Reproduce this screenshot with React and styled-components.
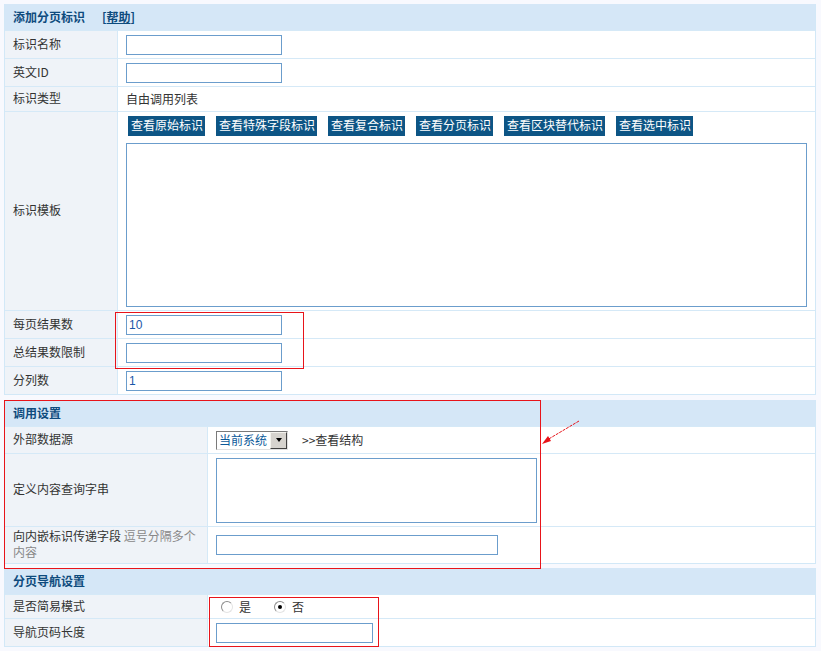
import styled, { createGlobalStyle } from "styled-components";

const GlobalStyle = createGlobalStyle`
  html, body {
    margin: 0;
    padding: 0;
    background: #f8f9fe;
  }
  body {
    font-family: "Liberation Sans", "Noto Sans CJK SC", sans-serif;
    font-size: 12px;
    color: #333;
  }
`;

const Page = styled.div`
  position: relative;
  padding: 4px;
  width: 812px;
`;

const Section = styled.div`
  border: 1px solid #d2e8f7;
  border-top-color: #d5e7f7;
  background: #fff;
  margin-bottom: ${(p) => p.$gap || 4}px;
`;

const SectionHead = styled.div`
  height: 25px;
  display: flex;
  align-items: center;
  padding: 0 0 2px 8px;
  box-sizing: border-box;
  background: #d5e7f7;
  color: #0e4b7d;
  font-weight: bold;
  font-family: "Noto Sans CJK SC", sans-serif;
  line-height: 16px;
`;

const HelpLink = styled.a`
  margin-left: 17px;
  color: #0e4b7d;
  text-decoration: none;
  font-weight: bold;

  span {
    text-decoration: underline;
  }
`;

const Row = styled.div`
  display: grid;
  grid-template-columns: ${(p) => p.$label}px 1fr;
  height: ${(p) => p.$h || 27}px;
  border-top: 1px solid #d5e9f7;
`;

const Label = styled.div`
  display: flex;
  align-items: center;
  padding: 0 6px 2px 8px;
  background: #eff3f8;
  border-right: 1px solid #d5e9f7;
  font-family: "Noto Sans CJK SC", sans-serif;
  line-height: 16px;
`;

const Hint = styled.span`
  color: #888;
`;

const Value = styled.div`
  display: flex;
  flex-direction: ${(p) => (p.$column ? "column" : "row")};
  align-items: ${(p) => (p.$column ? "flex-start" : "center")};
  padding: ${(p) => p.$pad || "0 8px"};
  font-family: "Noto Sans CJK SC", sans-serif;
  line-height: 16px;
`;

const TextInput = styled.input`
  box-sizing: border-box;
  width: ${(p) => p.$w}px;
  height: 20px;
  margin: 0;
  padding: 0 2px;
  border: 1px solid #6b9dcc;
  background: #fff;
  color: #1a56a8;
  font: 12px "Liberation Sans", sans-serif;
  outline: none;
`;

const TextArea = styled.textarea`
  box-sizing: border-box;
  display: block;
  width: ${(p) => p.$w}px;
  height: ${(p) => p.$h}px;
  margin: 0;
  border: 1px solid #6b9dcc;
  background: #fff;
  resize: none;
  outline: none;
`;

const ButtonBar = styled.div`
  display: flex;
  gap: 11px;
  margin: 0 0 7px 2px;
`;

const TagButton = styled.button`
  height: 20px;
  padding: 0 2px 2px 3px;
  border: 0;
  background: #0d5585;
  color: #fff;
  font: 12px "Noto Sans CJK SC", sans-serif;
  line-height: 18px;
  cursor: pointer;
`;

const SelectBox = styled.div`
  box-sizing: border-box;
  width: 72px;
  height: 19px;
  display: flex;
  align-items: stretch;
  border: 1px solid;
  border-color: #7a7a7a #e0e0e0 #e0e0e0 #7a7a7a;
  background: #fff;
`;

const SelectText = styled.span`
  flex: 1;
  padding-left: 2px;
  color: #0d5a9a;
  line-height: 16px;
`;

const SelectArrow = styled.span`
  width: 15px;
  display: flex;
  align-items: center;
  justify-content: center;
  background: #d6d3ce;
  border: 1px solid;
  border-color: #f4f3ee #404040 #404040 #f4f3ee;

  &::after {
    content: "";
    border-left: 3px solid transparent;
    border-right: 3px solid transparent;
    border-top: 4px solid #000;
  }
`;

const StructLink = styled.span`
  margin-left: 14px;
  color: #333;
`;

const RadioGroup = styled.div`
  display: flex;
  align-items: center;
  padding-left: 5px;
`;

const RadioItem = styled.label`
  display: flex;
  align-items: center;
  gap: 6px;
  margin-right: 23px;
`;

const RadioDot = styled.span`
  box-sizing: border-box;
  width: 12px;
  height: 12px;
  border-radius: 50%;
  border: 1px solid;
  border-color: #8c8c8c #e4e4e4 #e4e4e4 #8c8c8c;
  background: #fff;
  display: flex;
  align-items: center;
  justify-content: center;

  &::after {
    content: "";
    width: 4px;
    height: 4px;
    border-radius: 50%;
    background: ${(p) => (p.$on ? "#000" : "transparent")};
  }
`;

// red annotation frames drawn over the form
const Mark = styled.div`
  position: absolute;
  left: ${(p) => p.$x}px;
  top: ${(p) => p.$y}px;
  width: ${(p) => p.$w}px;
  height: ${(p) => p.$h}px;
  border: 1px solid #e8141a;
  pointer-events: none;
`;

const ArrowSvg = styled.svg`
  position: absolute;
  left: 538px;
  top: 418px;
  pointer-events: none;
`;

const tagButtons = [
  "查看原始标识",
  "查看特殊字段标识",
  "查看复合标识",
  "查看分页标识",
  "查看区块替代标识",
  "查看选中标识",
];

export default function App() {
  return (
    <>
      <GlobalStyle />
      <Page>
        <Section $gap={5}>
          <SectionHead>
            添加分页标识
            <HelpLink href="#">
              [<span>帮助</span>]
            </HelpLink>
          </SectionHead>
          <Row $label={113}>
            <Label>标识名称</Label>
            <Value>
              <TextInput $w={156} />
            </Value>
          </Row>
          <Row $label={113}>
            <Label>英文ID</Label>
            <Value>
              <TextInput $w={156} />
            </Value>
          </Row>
          <Row $label={113} $h={24}>
            <Label>标识类型</Label>
            <Value>自由调用列表</Value>
          </Row>
          <Row $label={113} $h={198}>
            <Label>标识模板</Label>
            <Value $column $pad="4px 8px 3px 8px">
              <ButtonBar>
                {tagButtons.map((b) => (
                  <TagButton key={b}>{b}</TagButton>
                ))}
              </ButtonBar>
              <TextArea $w={681} $h={164} />
            </Value>
          </Row>
          <Row $label={113}>
            <Label>每页结果数</Label>
            <Value>
              <TextInput $w={156} defaultValue="10" />
            </Value>
          </Row>
          <Row $label={113}>
            <Label>总结果数限制</Label>
            <Value>
              <TextInput $w={156} />
            </Value>
          </Row>
          <Row $label={113}>
            <Label>分列数</Label>
            <Value>
              <TextInput $w={156} defaultValue="1" />
            </Value>
          </Row>
        </Section>

        <Section>
          <SectionHead>调用设置</SectionHead>
          <Row $label={203} $h={26}>
            <Label>外部数据源</Label>
            <Value>
              <SelectBox>
                <SelectText>当前系统</SelectText>
                <SelectArrow />
              </SelectBox>
              <StructLink>&gt;&gt;查看结构</StructLink>
            </Value>
          </Row>
          <Row $label={203} $h={72}>
            <Label>定义内容查询字串</Label>
            <Value>
              <TextArea $w={321} $h={65} />
            </Value>
          </Row>
          <Row $label={203} $h={36}>
            <Label>
              <div>
                向内嵌标识传递字段 <Hint>逗号分隔多个</Hint>
                <br />
                <Hint>内容</Hint>
              </div>
            </Label>
            <Value>
              <TextInput $w={282} />
            </Value>
          </Row>
        </Section>

        <Section>
          <SectionHead>分页导航设置</SectionHead>
          <Row $label={203} $h={23}>
            <Label>是否简易模式</Label>
            <Value>
              <RadioGroup>
                <RadioItem>
                  <RadioDot />是
                </RadioItem>
                <RadioItem>
                  <RadioDot $on />否
                </RadioItem>
              </RadioGroup>
            </Value>
          </Row>
          <Row $label={203}>
            <Label>导航页码长度</Label>
            <Value>
              <TextInput $w={157} />
            </Value>
          </Row>
        </Section>

        <Mark $x={115} $y={312} $w={187} $h={55} />
        <Mark $x={4} $y={400} $w={535} $h={167} />
        <Mark $x={209} $y={597} $w={168} $h={48} />
        <ArrowSvg width="44" height="30" viewBox="0 0 44 30">
          <line x1="41" y1="3" x2="9" y2="22" stroke="#e8141a" strokeWidth="1" strokeDasharray="3 1" />
          <polygon points="4,26 10,18 13,23" fill="#e8141a" />
        </ArrowSvg>
      </Page>
    </>
  );
}
